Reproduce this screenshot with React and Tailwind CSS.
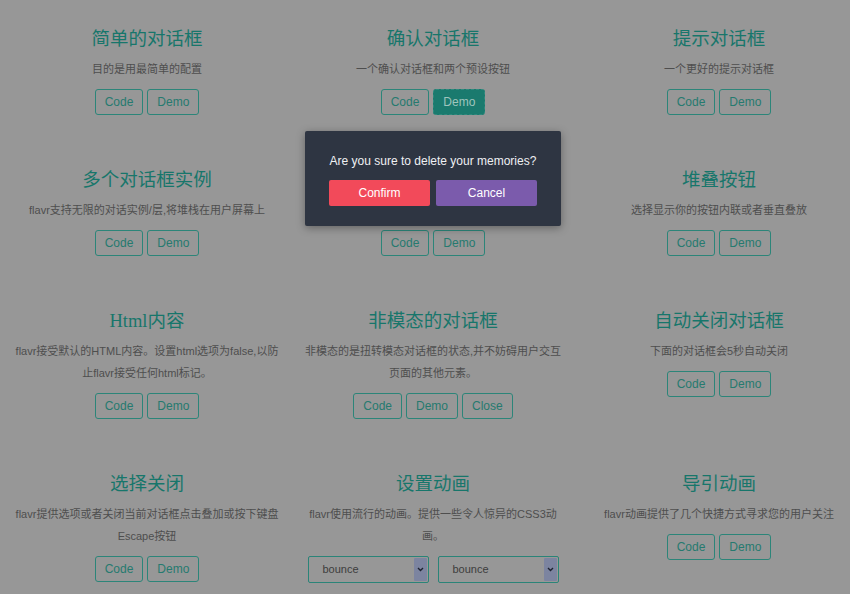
import React from "react";

const cards = [
  { title: "简单的对话框", desc: "目的是用最简单的配置", buttons: ["Code", "Demo"] },
  { title: "确认对话框", desc: "一个确认对话框和两个预设按钮", buttons: ["Code", "Demo"], active: "Demo" },
  { title: "提示对话框", desc: "一个更好的提示对话框", buttons: ["Code", "Demo"] },
  { title: "多个对话框实例", desc: "flavr支持无限的对话实例/层,将堆栈在用户屏幕上", buttons: ["Code", "Demo"] },
  { title: "", desc: "", buttons: ["Code", "Demo"] },
  { title: "堆叠按钮", desc: "选择显示你的按钮内联或者垂直叠放", buttons: ["Code", "Demo"] },
  {
    title: "Html内容",
    desc: "flavr接受默认的HTML内容。设置html选项为false,以防止flavr接受任何html标记。",
    buttons: ["Code", "Demo"],
  },
  {
    title: "非模态的对话框",
    desc: "非模态的是扭转模态对话框的状态,并不妨碍用户交互页面的其他元素。",
    buttons: ["Code", "Demo", "Close"],
    narrow: true,
  },
  { title: "自动关闭对话框", desc: "下面的对话框会5秒自动关闭", buttons: ["Code", "Demo"] },
  {
    title: "选择关闭",
    desc: "flavr提供选项或者关闭当前对话框点击叠加或按下键盘Escape按钮",
    buttons: ["Code", "Demo"],
  },
  { title: "设置动画", desc: "flavr使用流行的动画。提供一些令人惊异的CSS3动画。", selects: true },
  { title: "导引动画", desc: "flavr动画提供了几个快捷方式寻求您的用户关注", buttons: ["Code", "Demo"] },
];

const FakeSelect = () => (
  <div className="flex h-[27px] w-[121px] items-stretch rounded-[2px] border border-[#2a8478] bg-[#979797] p-[1px]">
    <span className="flex-1 pl-[13px] text-left text-[11px] leading-[23px] text-[#3d3d3d]">bounce</span>
    <span className="flex w-[13px] items-center justify-center rounded-[1px] bg-[#7c84a0]">
      <svg width="7" height="5" viewBox="0 0 7 5">
        <path d="M1 1l2.5 2.5L6 1" fill="none" stroke="#1e2230" strokeWidth="1.4" />
      </svg>
    </span>
  </div>
);

const Card = ({ card }) => (
  <div className={"flex flex-col items-center text-center " + (card.narrow ? "px-[12px]" : "px-[9px]")}>
    <h2 className="h-[28px] text-[18.5px] leading-[28px] text-[#17766b] [font-family:'Liberation_Serif','Noto_Sans_CJK_SC',serif]">
      {card.title}
    </h2>
    <p className="mt-[5px] min-h-[22px] text-[11px] leading-[22px] text-[#4e4e4e]">{card.desc}</p>
    {card.selects ? (
      <div className="mt-[9px] flex gap-[9px]">
        <FakeSelect />
        <FakeSelect />
      </div>
    ) : (
      <div className="mt-[9px] flex gap-[4px]">
        {card.buttons.map((b) =>
          b === card.active ? (
            <button
              key={b}
              className="h-[26px] rounded-[3px] border border-dashed border-[#2e8a7e] bg-[#1a7a6e] px-[9px] text-[12px] text-[#9fc4bd]"
            >
              {b}
            </button>
          ) : (
            <button
              key={b}
              className="h-[26px] rounded-[3px] border border-[#2c8579] px-[9px] text-[12px] text-[#267a6f]"
            >
              {b}
            </button>
          )
        )}
      </div>
    )}
  </div>
);

export default function App() {
  return (
    <div className="relative h-[594px] w-[850px] overflow-hidden bg-[#979797] [font-family:'Liberation_Sans','Noto_Sans_CJK_SC',sans-serif]">
      <div className="ml-[4px] grid grid-cols-[repeat(3,286px)] gap-y-[51px] pt-[25px]">
        {cards.map((c, i) => (
          <Card key={i} card={c} />
        ))}
      </div>

      <div className="absolute left-[305px] top-[131px] w-[256px] rounded-[2px] bg-[#2e3542] px-[24px] pb-[20px] pt-[21px] shadow-[0_2px_8px_rgba(0,0,0,0.35)]">
        <p className="whitespace-nowrap text-center text-[12px] leading-[18px] text-[#eef0f3]">
          Are you sure to delete your memories?
        </p>
        <div className="mt-[10px] flex gap-[6px]">
          <button className="h-[26px] flex-1 rounded-[2px] bg-[#f24a5a] text-[12px] text-white">Confirm</button>
          <button className="h-[26px] flex-1 rounded-[2px] bg-[#7b5bac] text-[12px] text-white">Cancel</button>
        </div>
      </div>
    </div>
  );
}
